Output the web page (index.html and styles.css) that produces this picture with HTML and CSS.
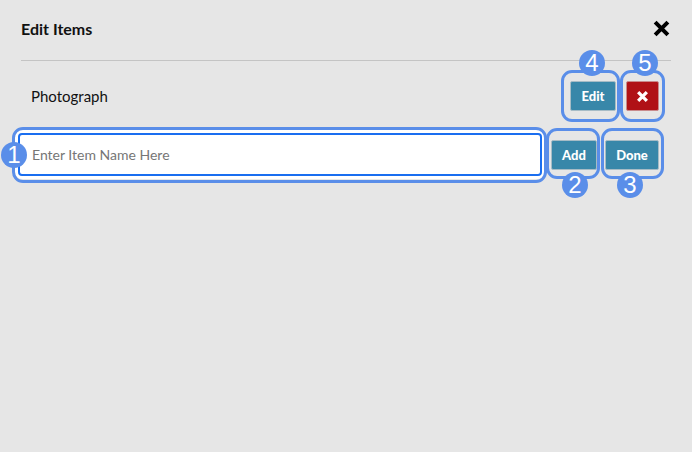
FILE: index.html
```html
<!DOCTYPE html>
<html lang="en">
<head>
<meta charset="utf-8">
<title>Edit Items</title>
<link rel="stylesheet" href="styles.css">
</head>
<body>
<div class="modal">
  <header class="head">
    <h1 class="title">Edit Items</h1>
    <button class="close" aria-label="Close">
      <svg width="17" height="17" viewBox="0 0 16 16"><path d="M2 2 L14 14 M14 2 L2 14" stroke="#000" stroke-width="3.8" fill="none"/></svg>
    </button>
  </header>
  <div class="rule"></div>
  <div class="item-row">
    <span class="item-name">Photograph</span>
    <div class="actions">
      <span class="hl hl-edit"><button class="btn teal btn-edit">Edit</button><span class="badge">4</span></span>
      <span class="hl hl-del"><button class="btn red btn-del" aria-label="Delete"><svg width="13" height="13" viewBox="0 0 12 12"><path d="M2 2 L10 10 M10 2 L2 10" stroke="#fff" stroke-width="3" fill="none"/></svg></button><span class="badge">5</span></span>
    </div>
  </div>
  <div class="add-row">
    <span class="hl hl-input"><input class="name-input" type="text" placeholder="Enter Item Name Here"><span class="badge">1</span></span>
    <span class="hl hl-add"><button class="btn teal btn-add">Add</button><span class="badge">2</span></span>
    <span class="hl hl-done"><button class="btn teal btn-done">Done</button><span class="badge">3</span></span>
  </div>
</div>
</body>
</html>
```

FILE: styles.css
```css
* { box-sizing: border-box; }
html, body { margin: 0; padding: 0; }
body {
  background: #e6e6e6;
  font-family: Lato, "Noto Sans", sans-serif;
  color: #111;
  width: 692px;
  height: 452px;
  overflow: hidden;
}
.modal { padding: 0 21px; }
.head {
  height: 56px;
  display: flex;
  align-items: center;
  justify-content: space-between;
}
.title {
  margin: 0;
  font-size: 16px;
  font-weight: 700;
  color: #111;
}
.close {
  border: 0;
  background: none;
  padding: 0;
  width: 17px;
  height: 17px;
  margin-right: 1px;
  display: flex;
}
.rule {
  margin-top: 4px;
  border-top: 1px solid #c4c4c4;
}
.item-row {
  margin-top: 20px;
  height: 30px;
  display: flex;
  align-items: center;
  justify-content: space-between;
  padding-left: 10px;
  padding-right: 12px;
}
.item-name { font-size: 15px; color: #111; }
.actions { display: flex; gap: 10px; }
.add-row {
  margin-top: 22px;
  height: 43px;
  display: flex;
  align-items: center;
  margin-left: -3px;
  padding-right: 12px;
}
.hl { position: relative; display: flex; }
.hl::before {
  content: "";
  position: absolute;
  border: 3.5px solid #5a8ee9;
  border-radius: 11px;
  pointer-events: none;
}
.hl-edit::before { top: -11px; bottom: -11px; left: -9px; right: -4px; }
.hl-del::before { top: -11px; bottom: -11px; left: -6px; right: -6px; }
.hl-input::before { top: -6px; bottom: -7px; left: -6px; right: -5px; }
.hl-add::before { top: -12px; bottom: -9px; left: -5px; right: -3px; }
.hl-done::before { top: -12px; bottom: -9px; left: -4px; right: -5px; }
.hl-input { flex: 1; }
.hl-add { margin-left: 9px; }
.hl-done { margin-left: 8px; }
.badge {
  position: absolute;
  width: 26px;
  height: 26px;
  border-radius: 50%;
  background: #5a8ee9;
  color: #fff;
  font-family: "Liberation Sans", Arial, sans-serif;
  font-size: 24px;
  line-height: 26px;
  text-align: center;
  z-index: 2;
}
.hl-edit .badge { left: 9px; top: -31px; }
.hl-del .badge { left: 6px; top: -31px; }
.hl-input .badge { left: -17px; top: 9px; }
.hl-add .badge { left: 11px; top: 32px; }
.hl-done .badge { left: 12px; top: 32px; }
.btn {
  height: 30px;
  border: 1px solid #a7bcc6;
  border-radius: 2px;
  color: #fff;
  font-family: Lato, "Noto Sans", sans-serif;
  font-weight: 900;
  font-size: 13px;
  padding: 0;
  display: flex;
  align-items: center;
  justify-content: center;
}
.teal { background: #3887a9; }
.red { background: #b01116; border-color: #c98a8c; }
.btn-edit { width: 46px; }
.btn-del { width: 33px; }
.btn-add { width: 46px; }
.btn-done { width: 54px; }
.name-input {
  width: 100%;
  height: 43px;
  border: 2px solid #1a6ef0;
  border-radius: 4px;
  background: #fff;
  box-shadow: 0 0 0 3px #fff;
  padding: 0 12px;
  font-family: Lato, "Noto Sans", sans-serif;
  font-size: 14px;
  color: #222;
  outline: none;
}
.name-input::placeholder { color: #767676; }
```
